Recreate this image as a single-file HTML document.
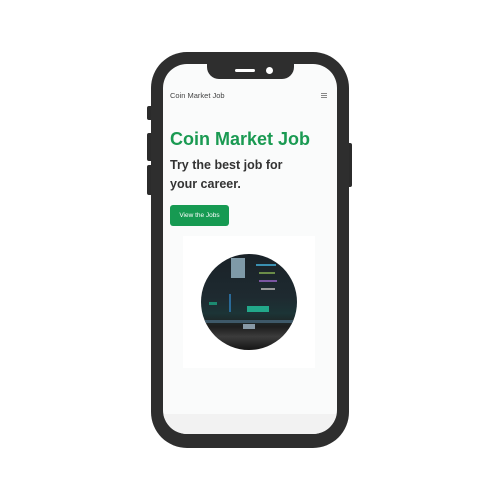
<!DOCTYPE html>
<html><head><style>
body{margin:0;width:500px;height:500px;background:#fff;position:relative;overflow:hidden;font-family:"Liberation Sans",sans-serif}
.btn{position:absolute;background:#2b2b2b;border-radius:2px}
.phone{position:absolute;left:151px;top:52px;width:198px;height:396px;background:#2e2e2e;border-radius:36px}
.screen{position:absolute;left:163px;top:64px;width:174px;height:370px;background:#fafbfb;border-radius:24px;overflow:hidden}
.notch{position:absolute;left:207px;top:62px;width:87px;height:17px;background:#2e2e2e;border-radius:0 0 12px 12px}
.c div{position:absolute}
</style></head><body>
<div class="btn" style="left:147px;top:106px;width:6px;height:14px"></div>
<div class="btn" style="left:147px;top:133px;width:6px;height:28px"></div>
<div class="btn" style="left:147px;top:165px;width:6px;height:30px"></div>
<div class="btn" style="left:347px;top:143px;width:5px;height:44px"></div>
<div class="phone"></div>
<div class="screen">
  <div style="position:absolute;left:7px;top:27px;font-size:7.5px;color:#444">Coin Market Job</div>
  <div style="position:absolute;right:10px;top:29px;width:6px;height:1px;background:#888;box-shadow:0 2px 0 #888,0 4px 0 #888"></div>
  <div style="position:absolute;left:7px;top:65px;font-size:18px;font-weight:bold;color:#1a9a52;white-space:nowrap">Coin Market Job</div>
  <div style="position:absolute;left:7px;top:92px;font-size:12.5px;font-weight:bold;color:#333;line-height:19px">Try the best job for<br>your career.</div>
  <div style="position:absolute;left:7px;top:141px;width:59px;height:21px;background:#169a52;border-radius:3px;color:#fff;font-size:6.5px;text-align:center;line-height:21px">View the Jobs</div>
  <div style="position:absolute;left:20px;top:172px;width:132px;height:132px;background:#fff"></div>
  <div class="c" style="position:absolute;left:38px;top:190px;width:96px;height:96px;border-radius:50%;overflow:hidden;background:linear-gradient(180deg,#1a2228 0%,#1e2a30 45%,#1c3436 62%,#1e1e1e 76%,#3c3c3c 86%,#151515 100%)">
    <div style="left:30px;top:4px;width:14px;height:20px;background:#7f9aa8"></div>
    <div style="left:55px;top:10px;width:20px;height:2px;background:#3a8fb0"></div>
    <div style="left:58px;top:18px;width:16px;height:2px;background:#6a8c48"></div>
    <div style="left:58px;top:26px;width:18px;height:2px;background:#7a55a0"></div>
    <div style="left:60px;top:34px;width:14px;height:2px;background:#999"></div>
    <div style="left:46px;top:52px;width:22px;height:6px;background:#22a88a"></div>
    <div style="left:8px;top:48px;width:8px;height:3px;background:#1c8a70"></div>
    <div style="left:28px;top:40px;width:2px;height:18px;background:#2a6a98"></div>
    <div style="left:4px;top:66px;width:88px;height:3px;background:#3e5868"></div>
    <div style="left:42px;top:70px;width:12px;height:5px;background:#8899a6"></div>
  </div>
  <div style="position:absolute;left:0;top:350px;width:174px;height:20px;background:#f2f2f2"></div>
</div>
<div class="notch"></div>
<div style="position:absolute;left:235px;top:69px;width:20px;height:3px;background:#fff;border-radius:2px"></div>
<div style="position:absolute;left:266px;top:67px;width:7px;height:7px;background:#fff;border-radius:50%"></div>
</body></html>
